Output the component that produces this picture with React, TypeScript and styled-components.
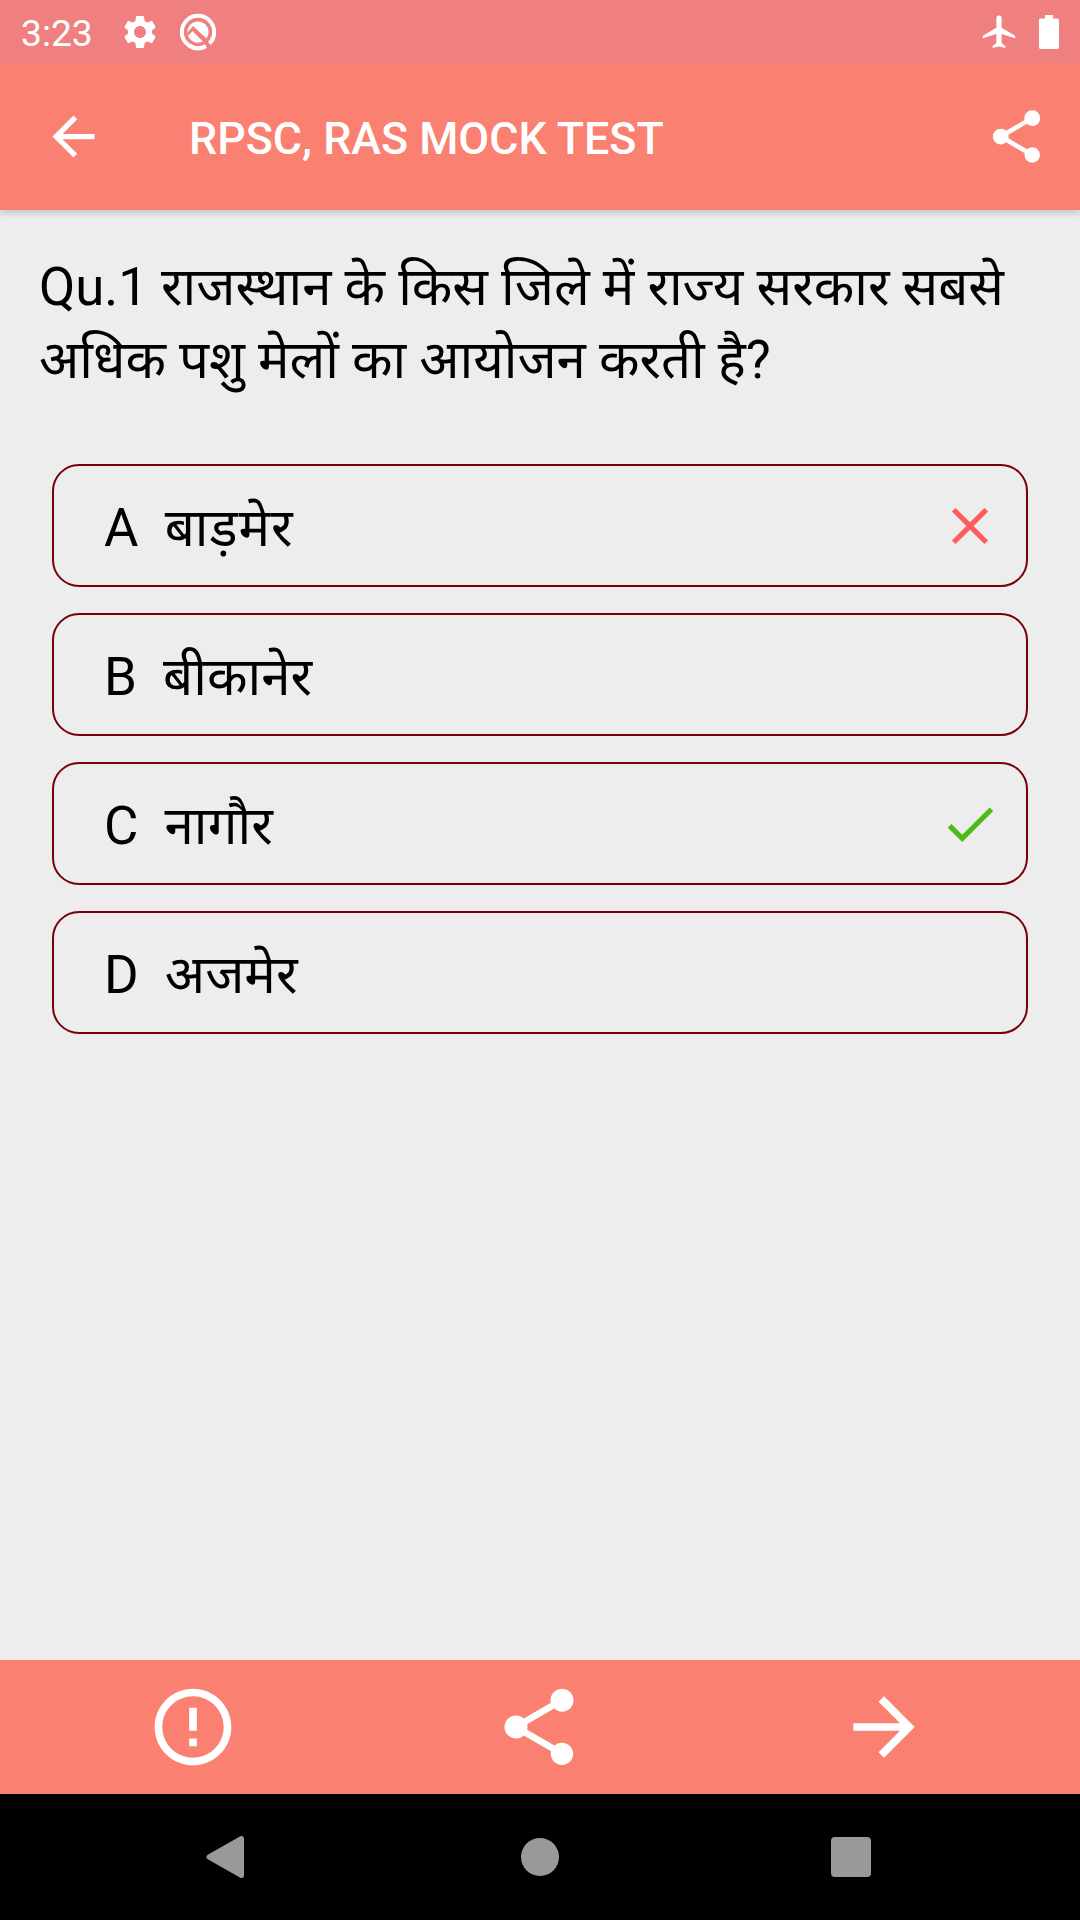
import React from "react";
import styled, { createGlobalStyle } from "styled-components";
import {
  MdArrowBack,
  MdArrowForward,
  MdCheck,
  MdClose,
  MdErrorOutline,
  MdSettings,
  MdShare,
} from "react-icons/md";

const GlobalStyle = createGlobalStyle`
  * { box-sizing: border-box; }
  body { margin: 0; background: #ededed; }
  button { border: 0; background: none; padding: 0; color: inherit; font: inherit; }
  svg { display: block; flex: none; }
`;

const Screen = styled.div`
  width: 1080px;
  height: 1920px;
  display: flex;
  flex-direction: column;
  overflow: hidden;
  background: #ededed;
  color: #000;
  font-family: Roboto, "Noto Sans Devanagari", "Noto Sans", sans-serif;
`;

const StatusBar = styled.header`
  position: relative;
  z-index: 1;
  height: 64px;
  flex: none;
  display: flex;
  align-items: center;
  justify-content: space-between;
  padding: 0 21px 1px 21px;
  background: #f08080;
  color: #fff;
`;

const StatusGroup = styled.div<{ $gap: number }>`
  display: flex;
  align-items: center;
  gap: ${(p) => p.$gap}px;
`;

const Clock = styled.span`
  width: 72px;
  margin-right: 8px;
  padding-top: 3px;
  font-size: 37.2px;
  line-height: 44px;
  white-space: nowrap;
`;

const AppBar = styled.div`
  height: 146px;
  flex: none;
  display: flex;
  align-items: center;
  padding: 0 32px 1px 42px;
  background: #fa8072;
  color: #fff;
  box-shadow: 0 2px 8px rgba(0, 0, 0, 0.22);
`;

const Title = styled.h1`
  flex: 1;
  margin: 0 0 0 84px;
  padding-top: 4px;
  font-size: 44.75px;
  font-weight: 500;
  line-height: 60px;
  white-space: nowrap;
`;

const Content = styled.main`
  flex: 1;
  padding: 41px 40px 0 39px;
`;

const Question = styled.p`
  height: 213px;
  margin: 0;
  font-size: 52.75px;
  line-height: 73px;
  white-space: pre;
`;

const Options = styled.div`
  display: flex;
  flex-direction: column;
  gap: 26px;
  padding: 0 12px 0 13px;
`;

const Option = styled.button`
  height: 123px;
  display: flex;
  align-items: center;
  justify-content: space-between;
  padding: 0 25px 0 50px;
  border: 2px solid #780008;
  border-radius: 27px;
  text-align: left;
`;

const OptionText = styled.span`
  font-size: 52.8px;
  line-height: 75px;
  padding-top: 5px;
  white-space: pre;
`;

const Answer = styled.span<{ $tracking?: number }>`
  letter-spacing: ${(p) => p.$tracking ?? 0}px;
`;

const BottomBar = styled.footer`
  height: 134px;
  flex: none;
  display: flex;
  align-items: center;
  justify-content: space-between;
  padding: 0 149.5px 0 147.4px;
  background: #fa8072;
  color: #fff;
`;

const NavBar = styled.nav`
  height: 126px;
  flex: none;
  display: flex;
  align-items: center;
  justify-content: space-between;
  padding: 0 209px 0 204px;
  background: #000;
`;

const HomeDot = styled.span`
  width: 38px;
  height: 38px;
  margin-left: 2px;
  border-radius: 50%;
  background: #999;
`;

const RecentsSquare = styled.span`
  width: 40px;
  height: 40px;
  border-radius: 4px;
  background: #999;
`;

const DebugIcon = () => (
  <svg width="38" height="38" viewBox="0 0 38 38" fill="none">
    <circle cx="19" cy="19" r="16.2" stroke="#fff" strokeWidth="4" />
    <circle cx="19" cy="19" r="10.6" fill="#fff" />
    <path d="M11.500 26.500 8 20 14 13 35 32.500 31 38Z" fill="#f08080" />
    <path d="M12.500 19 17 16.500 29 29 25.500 30.500Z" fill="#f08080" />
    <path d="M9.200 22.800 13.800 18 24.300 28.200A10.600 10.600 0 0 1 9.200 22.800Z" fill="#fff" />
    <path d="M15.500 18.500 28 31" stroke="#f08080" strokeWidth="2.400" />
    <path d="M10 32.500A16.200 16.200 0 0 0 27 33.100" stroke="#fff" strokeWidth="4" />
    <path d="M30.400 30.500A16.200 16.200 0 0 0 34 25" stroke="#fff" strokeWidth="4" />
  </svg>
);

const AirplaneIcon = () => (
  <svg width="34" height="34" viewBox="0 0 34 34" fill="#fff">
    <path d="M14.4 3.2a2.6 2.6 0 0 1 5.2 0v9.6l12.6 7.4c.7.4 1 1 1 1.7v1.4L19.6 19v9l3.2 2.5c.4.3.6.8.6 1.3v1.1L17 31.5l-6.4 1.4v-1.1c0-.5.2-1 .6-1.3l3.2-2.5v-9L.8 23.3v-1.4c0-.7.3-1.3 1-1.7l12.6-7.4Z" />
  </svg>
);

const BatteryIcon = () => (
  <svg width="20" height="34" viewBox="0 0 20 34" fill="#fff">
    <path d="M6 0h8v3.5h4.2c1 0 1.8.8 1.8 1.8v26.9c0 1-.8 1.8-1.8 1.8H1.8C.8 34 0 33.200 0 32.200V5.300c0-1 .8-1.800 1.800-1.800H6Z" />
  </svg>
);

const BackTriangle = () => (
  <svg width="42" height="44" viewBox="0 0 42 44">
    <path d="M5 22 37.500 3.500v37Z" fill="#999" stroke="#999" strokeWidth="5" strokeLinejoin="round" />
  </svg>
);

type Mark = "wrong" | "right" | undefined;

const options: { letter: string; text: string; mark?: Mark; tracking?: number }[] = [
  { letter: "A", text: "बाड़मेर", mark: "wrong", tracking: 0.9 },
  { letter: "B", text: "बीकानेर" },
  { letter: "C", text: "नागौर", mark: "right", tracking: 0.2 },
  { letter: "D", text: "अजमेर" },
];

export default function App() {
  return (
    <>
      <GlobalStyle />
      <Screen>
        <StatusBar>
          <StatusGroup $gap={19}>
            <Clock>3:23</Clock>
            <MdSettings size={40} />
            <DebugIcon />
          </StatusGroup>
          <StatusGroup $gap={23}>
            <AirplaneIcon />
            <BatteryIcon />
          </StatusGroup>
        </StatusBar>
        <AppBar>
          <MdArrowBack size={63} />
          <Title>RPSC, RAS MOCK TEST</Title>
          <MdShare size={63} />
        </AppBar>
        <Content>
          <Question>
            {"Qu.1 राजस्थान के किस जिले में राज्य सरकार सबसे\nअधिक पशु मेलों का आयोजन करती है?"}
          </Question>
          <Options>
            {options.map((o) => (
              <Option key={o.letter}>
                <OptionText>
                  {`${o.letter}  `}
                  <Answer $tracking={o.tracking}>{o.text}</Answer>
                </OptionText>
                {o.mark === "wrong" && <MdClose size={62} color="#ff5c5c" />}
                {o.mark === "right" && <MdCheck size={62} color="#4cbb17" />}
              </Option>
            ))}
          </Options>
        </Content>
        <BottomBar>
          <MdErrorOutline size={92} />
          <MdShare size={92} />
          <MdArrowForward size={92} />
        </BottomBar>
        <NavBar>
          <BackTriangle />
          <HomeDot />
          <RecentsSquare />
        </NavBar>
      </Screen>
    </>
  );
}
